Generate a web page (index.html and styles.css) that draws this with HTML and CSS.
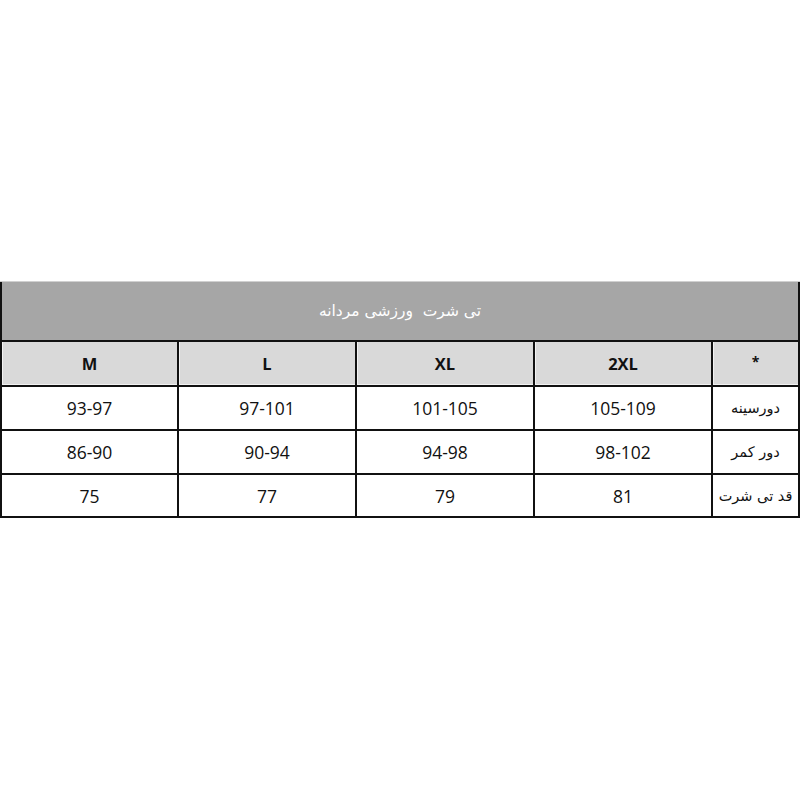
FILE: index.html
```html
<!DOCTYPE html>
<html lang="fa">
<head>
<meta charset="utf-8">
<title>جدول سایز تی شرت ورزشی مردانه</title>
<link rel="stylesheet" href="styles.css">
</head>
<body>
<div class="sheet" dir="rtl">
  <div class="title">تی شرت  ورزشی مردانه</div>
  <div class="head star">*</div>
  <div class="head">2XL</div>
  <div class="head">XL</div>
  <div class="head">L</div>
  <div class="head">M</div>

  <div class="label">دورسینه</div>
  <div class="val">105-109</div>
  <div class="val">101-105</div>
  <div class="val">97-101</div>
  <div class="val">93-97</div>

  <div class="label">دور کمر</div>
  <div class="val">98-102</div>
  <div class="val">94-98</div>
  <div class="val">90-94</div>
  <div class="val">86-90</div>

  <div class="label">قد تی شرت</div>
  <div class="val">81</div>
  <div class="val">79</div>
  <div class="val">77</div>
  <div class="val">75</div>
</div>
</body>
</html>
```

FILE: styles.css
```css
html, body {
  margin: 0;
  padding: 0;
  background: #ffffff;
}

body {
  padding-top: 282px;
}

.sheet {
  width: 800px;
  box-sizing: border-box;
  display: grid;
  grid-template-columns: 85px 176px 176px 176px 175px;
  grid-template-rows: 58px 43px 42px 42px 41px;
  gap: 2px;
  padding: 0 2px 2px 2px;
  background: #111111;
  border-top: 1px solid #d0d0d0;
  margin-top: -1px;
  font-family: "Open Sans", "Liberation Sans", "DejaVu Sans", sans-serif;
  color: #111111;
}

.sheet > div {
  display: flex;
  align-items: center;
  justify-content: center;
  white-space: pre;
}

.title {
  grid-column: 1 / -1;
  background: #a6a6a6;
  color: #ffffff;
  font-family: "DejaVu Sans", sans-serif;
  font-size: 15.5px;
}

.head {
  background: #d9d9d9;
  box-shadow: inset 1px 0 0 #f2f2f2, inset 0 -1px 0 #f2f2f2;
  font-weight: 700;
  font-size: 16.5px;
}

.head.star {
  font-size: 14px;
  padding-bottom: 4px;
}

.val {
  background: #ffffff;
  font-size: 17.5px;
}

.label {
  background: #ffffff;
  font-family: "DejaVu Sans", sans-serif;
  font-size: 14.5px;
}
```
